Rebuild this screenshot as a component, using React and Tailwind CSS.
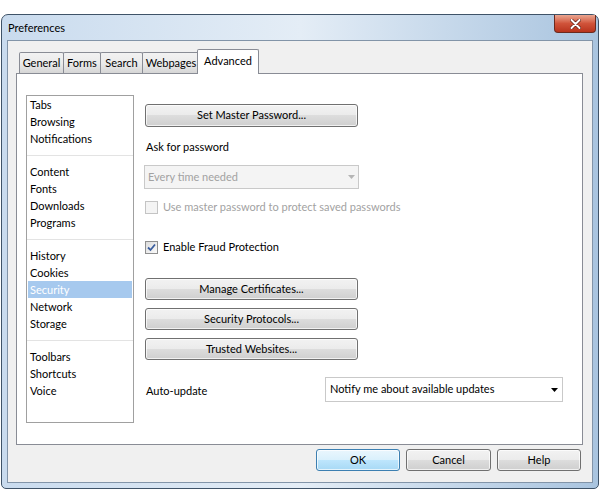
import React from "react";

const font = { fontFamily: 'Lato, "Open Sans", sans-serif' };

function Btn({ children, className = "", def = false }) {
  return (
    <div
      className={
        "flex items-center justify-center rounded-[3px] border text-[11px] text-black shadow-[inset_0_0_0_1px_rgba(255,255,255,0.7)] " +
        (def
          ? "border-[#3c7fb1] bg-[linear-gradient(to_bottom,#eaf6fd_0%,#d9f0fc_50%,#bee6fd_50%,#a7d9f5_100%)] "
          : "border-[#707070] bg-[linear-gradient(to_bottom,#f2f2f2_0%,#ebebeb_50%,#dddddd_50%,#cfcfcf_100%)] ") +
        className
      }
    >
      {children}
    </div>
  );
}

function Check({ checked, disabled }) {
  return (
    <div
      className={
        "w-[13px] h-[13px] border flex items-center justify-center " +
        (disabled ? "border-[#c4c4c4] bg-[#f4f4f4]" : "border-[#8f8f8f] bg-gradient-to-br from-[#dcdcdc] to-[#fbfbfb]")
      }
    >
      {checked && (
        <svg width="9" height="9" viewBox="0 0 9 9">
          <path d="M1 4.5 L3.5 7 L8 1.5" stroke="#3a5d9e" strokeWidth="1.8" fill="none" />
        </svg>
      )}
    </div>
  );
}

function Tab({ label, w, active }) {
  if (active) {
    return (
      <div
        className="relative z-10 -ml-[2px] h-[25px] -mb-px flex items-center justify-center border border-b-0 border-[#898c95] bg-white text-[11px] text-black rounded-t-[2px]"
        style={{ width: w }}
      >
        <span className="-mt-[1px]">{label}</span>
      </div>
    );
  }
  return (
    <div
      className="h-[21px] -mr-px flex items-center justify-center border border-b-0 border-[#898c95] bg-gradient-to-b from-[#f2f2f2] via-[#ebebeb] to-[#d6d6d6] text-[11px] text-black rounded-t-[2px]"
      style={{ width: w }}
    >
      {label}
    </div>
  );
}

const groups = [
  ["Tabs", "Browsing", "Notifications"],
  ["Content", "Fonts", "Downloads", "Programs"],
  ["History", "Cookies", "Security", "Network", "Storage"],
  ["Toolbars", "Shortcuts", "Voice"],
];

export default function App() {
  return (
    <div className="w-[600px] h-[497px] bg-white overflow-hidden" style={font}>
      <div className="mt-[14px] ml-[1px] w-[598px] h-[475px] rounded-t-[7px] rounded-b-[5px] border border-[#3f5368] bg-gradient-to-r from-[#c9dbee] via-[#e4edf6] to-[#a9c4df] flex flex-col">
        {/* Title bar */}
        <div className="h-[25px] flex items-start">
          <span className="ml-[6px] mt-[5px] text-[11px] text-black">Preferences</span>
          <div className="ml-auto mr-[2px] mt-0 w-[42px] h-[18px] rounded-b-[4px] border border-[#6b2a1f] border-t-0 bg-gradient-to-b from-[#e9a590] via-[#d0533a] to-[#b8331c] flex items-center justify-center">
            <svg width="11" height="10" viewBox="0 0 11 10">
              <path d="M1.5 1 L9.5 9 M9.5 1 L1.5 9" stroke="#5a1b10" strokeWidth="3.4" strokeLinecap="round" />
              <path d="M1.5 1 L9.5 9 M9.5 1 L1.5 9" stroke="#ffffff" strokeWidth="2" strokeLinecap="round" />
            </svg>
          </div>
        </div>
        {/* Client area */}
        <div className="mx-[5px] mb-[5px] flex-1 border border-[#8294a8] bg-[#f0f0f0] flex flex-col pl-[8px] pr-[9px] pt-[9px]">
          <div className="flex items-end pl-[3px] h-[23px]">
            <Tab label="General" w={45} />
            <Tab label="Forms" w={38} />
            <Tab label="Search" w={43} />
            <Tab label="Webpages" w={58} />
            <Tab label="Advanced" w={62} active />
          </div>
          <div className="h-[372px] bg-white border border-[#898c95] flex pl-[9px] pt-[21px]">
            {/* Left list */}
            <div className="w-[108px] h-[328px] border border-[#a0a0a0] flex flex-col text-[11px] text-black">
              {groups.map((g, gi) => (
                <div key={gi} className="flex flex-col">
                  {gi > 0 && <div className="mt-[8px] mb-[7px] h-px bg-[#e3e3e3]" />}
                  {g.map((it) => (
                    <div
                      key={it}
                      className={
                        "h-[17px] leading-[17px] mx-px pl-[2px] " +
                        (it === "Security" ? "bg-[#a6c9ee] text-white" : "")
                      }
                    >
                      {it}
                    </div>
                  ))}
                </div>
              ))}
            </div>
            {/* Right content */}
            <div className="ml-[11px] pt-[9px] flex flex-col text-[11px] text-black">
              <Btn className="w-[213px] h-[23px]">Set Master Password...</Btn>
              <div className="mt-[11px] ml-px h-[17px] leading-[17px]">Ask for password</div>
              <div className="mt-[10px] -ml-px w-[215px] h-[24px] border border-[#c9c9c9] bg-[#f4f4f4] flex items-center pl-[3px] text-[#a2a2a2]">
                <span>Every time needed</span>
                <svg className="ml-auto mr-[3px]" width="7" height="4" viewBox="0 0 7 4">
                  <path d="M0 0 L7 0 L3.5 4 Z" fill="#b5b5b5" />
                </svg>
              </div>
              <div className="mt-[11px] flex items-center h-[15px]">
                <Check disabled />
                <span className="ml-[5px] text-[#a2a2a2]">Use master password to protect saved passwords</span>
              </div>
              <div className="mt-[25px] flex items-center h-[15px]">
                <Check checked />
                <span className="ml-[5px]">Enable Fraud Protection</span>
              </div>
              <Btn className="mt-[23px] w-[213px] h-[22px]">Manage Certificates...</Btn>
              <Btn className="mt-[8px] w-[213px] h-[22px]">Security Protocols...</Btn>
              <Btn className="mt-[8px] w-[213px] h-[22px]">Trusted Websites...</Btn>
              <div className="mt-[17px] flex items-center">
                <span className="ml-px mt-[3px] w-[179px]">Auto-update</span>
                <div className="w-[238px] h-[25px] border border-[#c9c9c9] bg-white flex items-center pl-[4px]">
                  <span>Notify me about available updates</span>
                  <svg className="ml-auto mr-[4px]" width="7" height="4" viewBox="0 0 7 4">
                    <path d="M0 0 L7 0 L3.5 4 Z" fill="#000" />
                  </svg>
                </div>
              </div>
            </div>
          </div>
          <div className="mt-[4px] flex justify-end gap-[6px] pr-[2px]">
            <Btn def className="w-[84px] h-[22px]">OK</Btn>
            <Btn className="w-[85px] h-[22px]">Cancel</Btn>
            <Btn className="w-[84px] h-[22px]">Help</Btn>
          </div>
        </div>
      </div>
    </div>
  );
}
